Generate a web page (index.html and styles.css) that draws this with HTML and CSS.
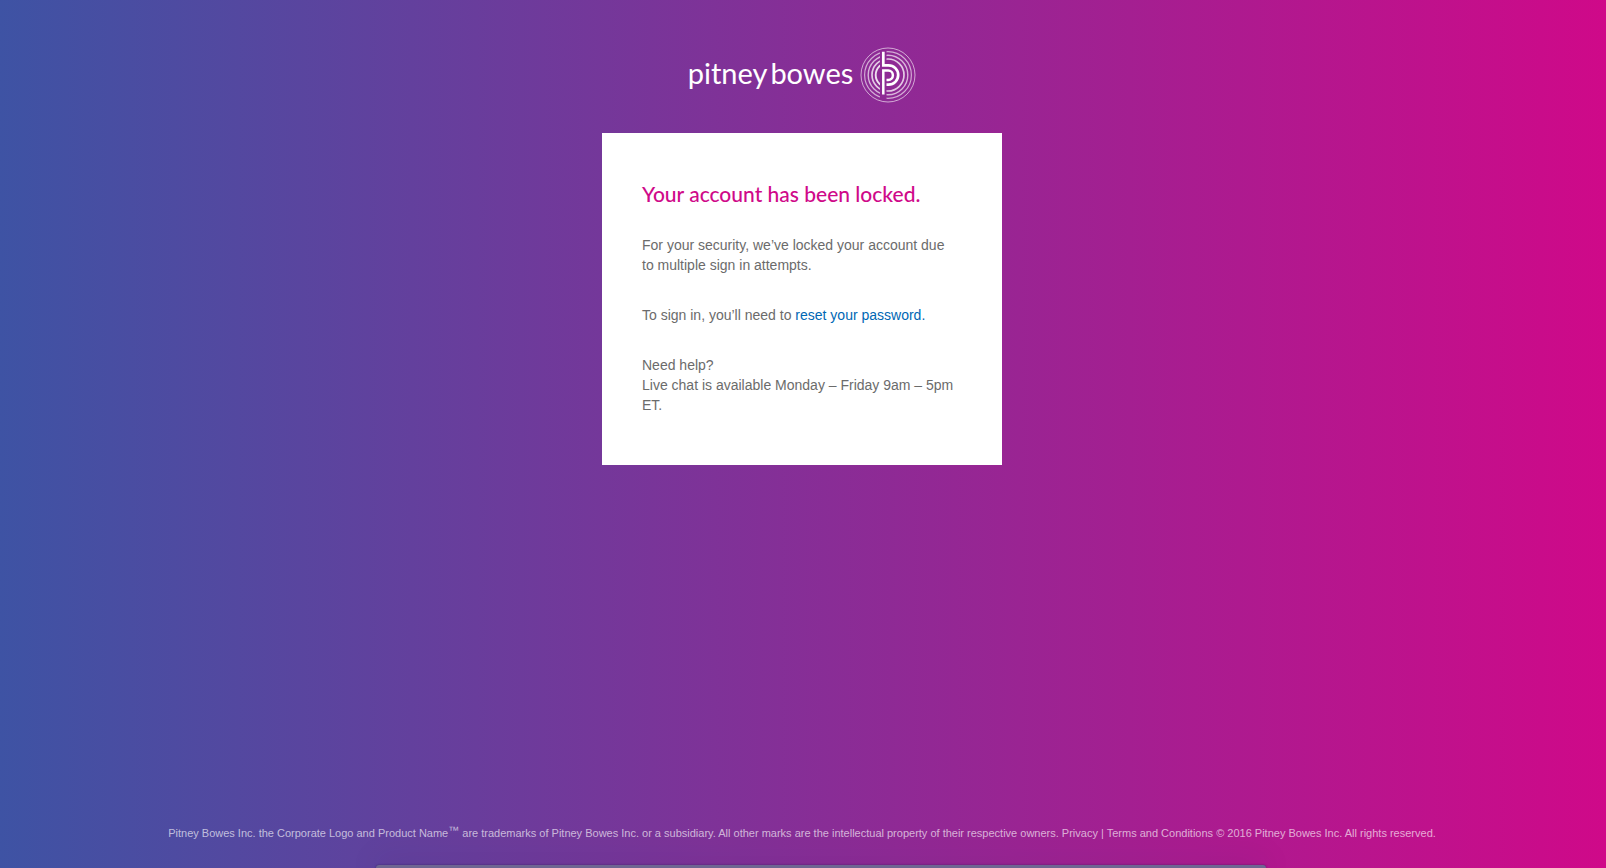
FILE: index.html
```html
<!DOCTYPE html>
<html lang="en">
<head>
<meta charset="utf-8">
<title>Account locked | Pitney Bowes</title>
<link rel="stylesheet" href="styles.css">
</head>
<body>
<header class="brand">
  <span class="brand-name"><span>pitney</span> <span>bowes</span></span>
  <svg class="brand-mark" viewBox="0 0 56 56" fill="none" stroke="#fff" aria-hidden="true">
    <clipPath id="sides"><path d="M0 0H20V56H0ZM26.500 0H56V56H26.500Z"/></clipPath>
    <clipPath id="left"><path d="M0 0H20V56H0Z"/></clipPath>
    <circle cx="28" cy="28" r="27" stroke-width="1" opacity=".6"/>
    <g clip-path="url(#sides)">
      <circle cx="28" cy="28" r="23.400" stroke-width="1.200" opacity=".6"/>
      <circle cx="28" cy="28" r="19.800" stroke-width="1.400" opacity=".65"/>
      <circle cx="28" cy="28" r="16" stroke-width="1.700" opacity=".75"/>
    </g>
    <circle cx="28" cy="28" r="12.300" stroke-width="1.900" opacity=".85" clip-path="url(#left)"/>
    <path d="M23.300 4.700V18.300H28.500A9.700 9.700 0 0 1 28.500 37.700H26.500" stroke-width="2.700"/>
    <path d="M23.300 47.500V23.500H28.200A4.700 4.700 0 0 1 28.200 32.900H26.500" stroke-width="2.500"/>
  </svg>
</header>
<main class="card">
  <h1>Your account has been locked.</h1>
  <p>For your security, we’ve locked your account due<br>to multiple sign in attempts.</p>
  <p>To sign in, you’ll need to <a href="#reset">reset your password.</a></p>
  <p>Need help?<br>Live chat is available Monday – Friday 9am – 5pm ET.</p>
</main>
<footer class="legal">
  Pitney Bowes Inc. the Corporate Logo and Product Name<sup>™</sup> are trademarks of Pitney Bowes Inc. or a subsidiary. All other marks are the intellectual property of their respective owners. <a href="#privacy">Privacy</a> | <a href="#terms">Terms and Conditions</a> © 2016 Pitney Bowes Inc. All rights reserved.
</footer>
<div class="dock"></div>
</body>
</html>
```
FILE: styles.css
```css
* { box-sizing: border-box; }
body {
  margin: 0;
  padding-right: 2px;
  min-height: 100vh;
  display: flex;
  flex-direction: column;
  align-items: center;
  overflow: hidden;
  background: linear-gradient(to right, #3e53a4, #cf0989);
  font: 14px/20px "Liberation Sans", Arial, sans-serif;
  color: #6b6b6b;
}
.brand {
  display: flex;
  align-items: center;
  gap: 7px;
  padding: 47px 0 30px;
}
.brand-name {
  display: flex;
  gap: 3px;
  padding-bottom: 4px;
  font: 400 29px/40px Lato, "Noto Sans", sans-serif;
  color: #fff;
}
.brand-mark { width: 56px; height: 56px; }
.card {
  width: 400px;
  max-width: 100%;
  padding: 50px 40px;
  background: #fff;
}
.card h1 {
  margin: 0 0 30px;
  font: 500 21px/22px Lato, "Noto Sans", sans-serif;
  color: #cf0989;
}
.card p { margin: 0 0 30px; }
.card p:last-child { margin: 0; }
.card a { color: #0067b4; text-decoration: none; }
.legal {
  margin-top: auto;
  padding: 0 20px 22px;
  font-size: 11px;
  line-height: 20px;
  text-align: center;
  color: rgba(255, 255, 255, .65);
}
.legal a { color: inherit; text-decoration: none; }
.legal sup { font-size: 11px; line-height: 0; vertical-align: 3px; }
.dock {
  width: 55.5%;
  height: 3px;
  margin-left: 38px;
  border-radius: 6px 6px 0 0;
  background: #6f6692;
  box-shadow: 0 0 30px rgba(30, 20, 70, .35), 0 0 2px rgba(30, 20, 70, .6);
}
```
